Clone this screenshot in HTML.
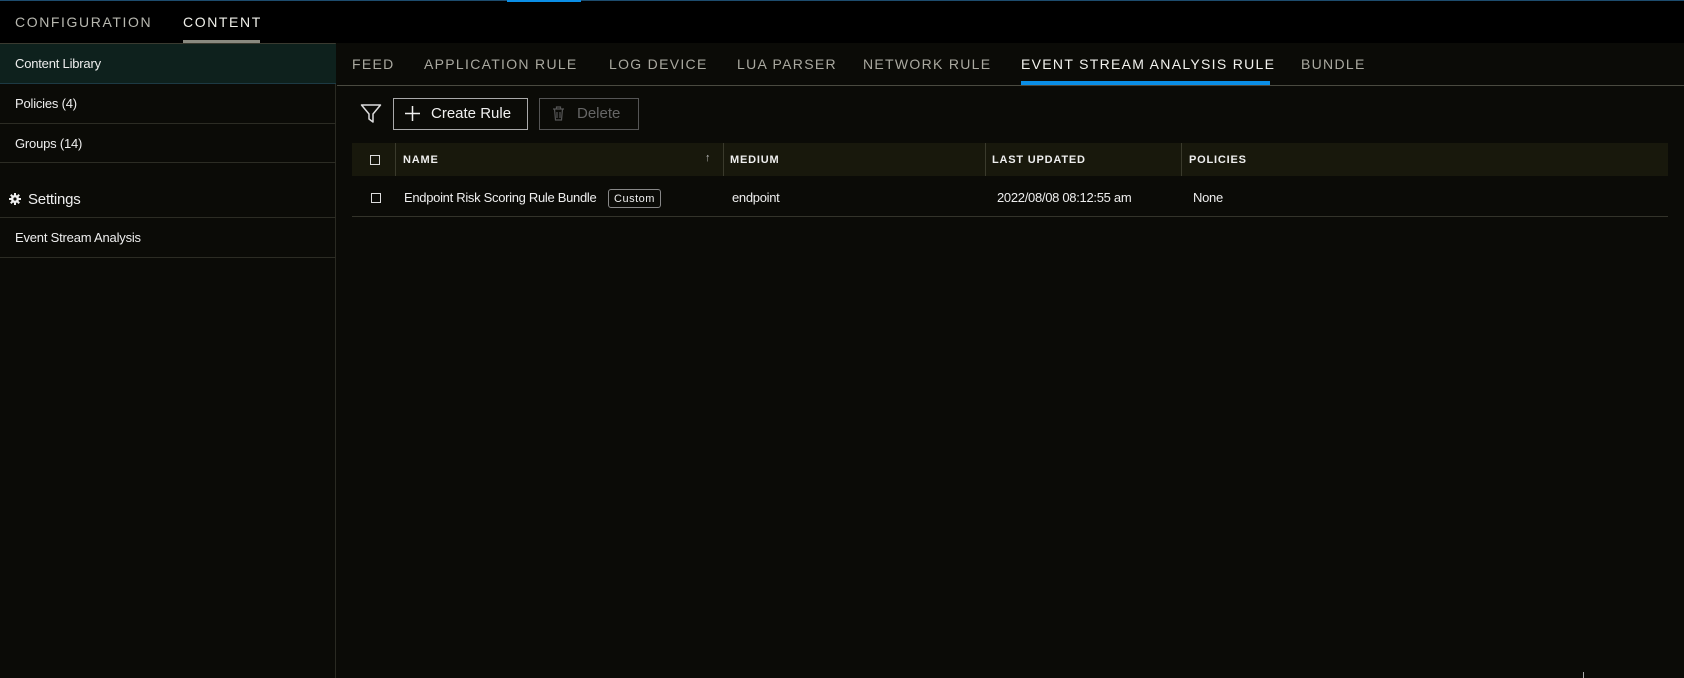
<!DOCTYPE html>
<html><head><meta charset="utf-8"><style>
*{margin:0;padding:0;box-sizing:border-box}
body{width:1684px;height:678px;overflow:hidden;background:#0b0b07;font-family:"Liberation Sans",sans-serif;color:#e8e8e0;position:relative}
.a{position:absolute;white-space:nowrap}
.top{left:0;top:0;width:1684px;height:43px;background:#000;border-top:1px solid #1d4c6e}
.tt{font-size:14px;letter-spacing:1.6px;color:#b8b8b0;top:14px}
.side{left:0;top:43px;width:336px;height:635px;border-right:1px solid #2a2a22;border-top:1px solid #3a3a30}
.row{left:0;width:336px;border-bottom:1px solid #2c2c24;font-size:13px;padding-left:15px;color:#eee;letter-spacing:-0.2px}
.tab{top:56px;font-size:14px;letter-spacing:1.3px;color:#aaa9a0}
.hd{font-size:11px;font-weight:bold;letter-spacing:0.8px;top:154px;color:#eee}
.cb{width:10px;height:10px;border:1.5px solid #ddd}
.td{font-size:13px;top:190px;color:#eee;letter-spacing:-0.3px}
.dv{top:143px;width:1px;height:33px;background:#3a3a2c}
</style></head><body>
<div class="a top"></div>
<div class="a" style="left:507px;top:0;width:74px;height:2px;background:#0a8ee6"></div>
<div class="a tt" style="left:15px">CONFIGURATION</div>
<div class="a tt" style="left:183px;color:#f0f0ea">CONTENT</div>
<div class="a" style="left:183px;top:40px;width:77px;height:3px;background:#8a8a80"></div>
<div class="a side"></div>
<div class="a row" style="top:44px;height:40px;line-height:40px;background:#0e211d;border-bottom:1px solid #1d3a44">Content Library</div>
<div class="a row" style="top:84px;height:40px;line-height:40px">Policies (4)</div>
<div class="a row" style="top:124px;height:39px;line-height:39px">Groups (14)</div>
<div class="a row" style="top:163px;height:55px;line-height:74px;font-size:15px;padding-left:28px">Settings</div>
<svg class="a" style="left:9px;top:193px" width="12" height="12" viewBox="0 0 12 12"><g fill="#eee"><circle cx="6" cy="6" r="4"/><rect x="5" y="0" width="2" height="12"/><rect x="0" y="5" width="12" height="2"/><rect x="5" y="0" width="2" height="12" transform="rotate(45 6 6)"/><rect x="5" y="0" width="2" height="12" transform="rotate(-45 6 6)"/></g><circle cx="6" cy="6" r="1.6" fill="#0b0b07"/></svg>
<div class="a row" style="top:218px;height:40px;line-height:40px">Event Stream Analysis</div>
<div class="a" style="left:337px;top:85px;width:1347px;height:1px;background:#4a4a40"></div>
<div class="a tab" style="left:352px">FEED</div>
<div class="a tab" style="left:424px">APPLICATION RULE</div>
<div class="a tab" style="left:609px">LOG DEVICE</div>
<div class="a tab" style="left:737px">LUA PARSER</div>
<div class="a tab" style="left:863px">NETWORK RULE</div>
<div class="a tab" style="left:1021px;color:#f2f2ee">EVENT STREAM ANALYSIS RULE</div>
<div class="a tab" style="left:1301px">BUNDLE</div>
<div class="a" style="left:1021px;top:81px;width:249px;height:4px;background:#0a8ee6"></div>
<svg class="a" style="left:360px;top:103px" width="22" height="22" viewBox="0 0 22 22"><path d="M1.5 2h19l-7.5 9v8l-4 -3v-5z" fill="none" stroke="#ddd" stroke-width="1.5" stroke-linejoin="round"/></svg>
<div class="a" style="left:393px;top:98px;width:135px;height:32px;border:1px solid #aaa"></div>
<svg class="a" style="left:405px;top:106px" width="15" height="15" viewBox="0 0 15 15"><path d="M7.5 0v15M0 7.5h15" stroke="#eee" stroke-width="1.5"/></svg>
<div class="a" style="left:431px;top:105px;font-size:15px;color:#f0f0f0">Create Rule</div>
<div class="a" style="left:539px;top:98px;width:100px;height:32px;border:1px solid #555"></div>
<svg class="a" style="left:552px;top:106px" width="13" height="15" viewBox="0 0 13 15"><path d="M1 3h11M4.5 3V1h4v2M2.5 3l1 11h6l1-11M5 6v6M8 6v6" fill="none" stroke="#555" stroke-width="1.2"/></svg>
<div class="a" style="left:577px;top:105px;font-size:15px;color:#666">Delete</div>
<div class="a" style="left:352px;top:143px;width:1316px;height:33px;background:#18180c"></div>
<div class="a dv" style="left:395px"></div><div class="a dv" style="left:723px"></div><div class="a dv" style="left:985px"></div><div class="a dv" style="left:1181px"></div>
<div class="a cb" style="left:370px;top:155px"></div>
<div class="a hd" style="left:403px">NAME</div>
<div class="a" style="left:705px;top:152px;font-size:11px;color:#bbb">&#8593;</div>
<div class="a hd" style="left:730px">MEDIUM</div>
<div class="a hd" style="left:992px">LAST UPDATED</div>
<div class="a hd" style="left:1189px">POLICIES</div>
<div class="a cb" style="left:371px;top:193px"></div>
<div class="a td" style="left:404px">Endpoint Risk Scoring Rule Bundle</div>
<div class="a" style="left:608px;top:189px;width:53px;height:19px;border:1px solid #888;border-radius:3px;font-size:11px;line-height:19px;text-align:center;letter-spacing:0.5px;color:#eee">Custom</div>
<div class="a td" style="left:732px">endpoint</div>
<div class="a td" style="left:997px">2022/08/08 08:12:55 am</div>
<div class="a td" style="left:1193px">None</div>
<div class="a" style="left:352px;top:216px;width:1316px;height:1px;background:#33332a"></div>
<div class="a" style="left:1583px;top:672px;width:1px;height:6px;background:#aaa"></div>
</body></html>
